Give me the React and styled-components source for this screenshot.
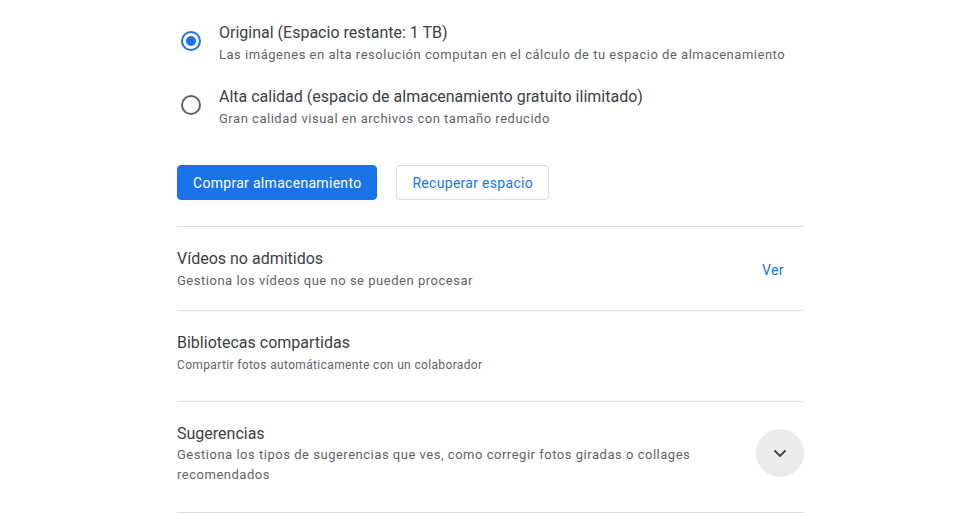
import styled, { createGlobalStyle } from 'styled-components';

const GlobalStyle = createGlobalStyle`
  body {
    margin: 0;
    background: #fff;
    font-family: Roboto, "Liberation Sans", Arial, sans-serif;
    color: #3c4043;
  }
`;

const Page = styled.div`
  width: 627px;
  margin-left: 177px;
  padding-top: 23px;
`;

const Options = styled.div`
  display: flex;
  flex-direction: column;
  gap: 22px;
`;

const Option = styled.label`
  display: flex;
  align-items: flex-start;
  gap: 18px;
  padding-left: 4px;
  cursor: pointer;
`;

const Radio = styled.span`
  flex: none;
  width: 20px;
  height: 20px;
  box-sizing: border-box;
  margin-top: 8px;
  border-radius: 50%;
  border: 2px solid ${(p) => (p.checked ? '#1a73e8' : '#5f6368')};
  display: flex;
  align-items: center;
  justify-content: center;

  &::after {
    content: '';
    width: 10px;
    height: 10px;
    border-radius: 50%;
    background: #1a73e8;
    display: ${(p) => (p.checked ? 'block' : 'none')};
  }
`;

const OptionText = styled.div`
  display: flex;
  flex-direction: column;
`;

const Title = styled.div`
  font-size: 16px;
  line-height: 20px;
  color: #3c4043;
`;

const Subtitle = styled.div`
  font-size: ${(p) => p.size || 13}px;
  line-height: 20px;
  color: #5f6368;
  margin-top: ${(p) => p.gap ?? 2}px;
  letter-spacing: ${(p) => (p.size === 12 ? 0.35 : 0.52)}px;
`;

const Actions = styled.div`
  display: flex;
  gap: 19px;
  margin-top: 36px;
  margin-bottom: 26px;
`;

const Button = styled.button`
  height: 35px;
  box-sizing: border-box;
  padding: 0 15px;
  border-radius: 4px;
  font-family: Roboto, "Liberation Sans", Arial, sans-serif;
  font-size: 14px;
  font-weight: 400;
  letter-spacing: 0.3px;
  cursor: pointer;
  background: ${(p) => (p.primary ? '#1a73e8' : '#fff')};
  color: ${(p) => (p.primary ? '#fff' : '#1a73e8')};
  border: 1px solid ${(p) => (p.primary ? '#1a73e8' : '#dadce0')};
`;

const Row = styled.div`
  display: flex;
  align-items: center;
  justify-content: space-between;
  border-top: 1px solid #dadce0;
  padding: 22px 0 ${(p) => p.pb}px;
  ${(p) => p.last && 'border-bottom: 1px solid #dadce0;'}
`;

const RowText = styled.div`
  display: flex;
  flex-direction: column;
  max-width: 545px;
`;

const LinkButton = styled.button`
  background: none;
  border: none;
  color: #1a73e8;
  font-family: Roboto, "Liberation Sans", Arial, sans-serif;
  font-size: 14px;
  font-weight: 400;
  letter-spacing: 0.4px;
  padding: 8px 0;
  margin-right: 20px;
  cursor: pointer;
`;

const Expand = styled.button`
  flex: none;
  width: 48px;
  height: 48px;
  border-radius: 50%;
  border: none;
  background: #ebebeb;
  display: flex;
  align-items: center;
  justify-content: center;
  margin-top: -4px;
  cursor: pointer;
`;

const Chevron = () => (
  <svg width="24" height="24" viewBox="0 0 24 24">
    <path d="M6.5 9.5 12 15l5.5-5.5" fill="none" stroke="#3c4043" strokeWidth="1.8" />
  </svg>
);

const App = () => (
  <>
    <GlobalStyle />
    <Page>
      <Options>
        <Option>
          <Radio checked />
          <OptionText>
            <Title>Original (Espacio restante: 1 TB)</Title>
            <Subtitle>
              Las imágenes en alta resolución computan en el cálculo de tu espacio de almacenamiento
            </Subtitle>
          </OptionText>
        </Option>
        <Option>
          <Radio />
          <OptionText>
            <Title>Alta calidad (espacio de almacenamiento gratuito ilimitado)</Title>
            <Subtitle>Gran calidad visual en archivos con tamaño reducido</Subtitle>
          </OptionText>
        </Option>
      </Options>
      <Actions>
        <Button primary>Comprar almacenamiento</Button>
        <Button>Recuperar espacio</Button>
      </Actions>
      <Row pb={19}>
        <RowText>
          <Title>Vídeos no admitidos</Title>
          <Subtitle>Gestiona los vídeos que no se pueden procesar</Subtitle>
        </RowText>
        <LinkButton>Ver</LinkButton>
      </Row>
      <Row pb={26}>
        <RowText>
          <Title>Bibliotecas compartidas</Title>
          <Subtitle size={12}>Compartir fotos automáticamente con un colaborador</Subtitle>
        </RowText>
      </Row>
      <Row pb={27} last>
        <RowText>
          <Title>Sugerencias</Title>
          <Subtitle gap={1}>
            Gestiona los tipos de sugerencias que ves, como corregir fotos giradas o collages
            recomendados
          </Subtitle>
        </RowText>
        <Expand>
          <Chevron />
        </Expand>
      </Row>
    </Page>
  </>
);

export default App;
